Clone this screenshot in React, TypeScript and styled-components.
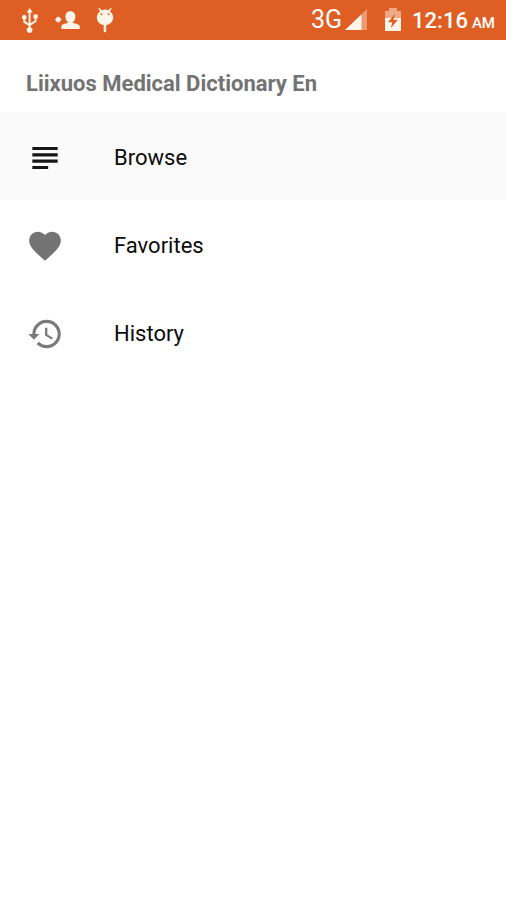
import React from "react";
import styled, { createGlobalStyle } from "styled-components";

const GlobalStyle = createGlobalStyle`
  *, *::before, *::after { box-sizing: border-box; }
  body {
    margin: 0;
    background: #ffffff;
    font-family: Roboto, "Noto Sans", sans-serif;
  }
`;

const Screen = styled.div`
  min-height: 100vh;
  background: #ffffff;
`;

const StatusBar = styled.header`
  display: flex;
  align-items: center;
  justify-content: space-between;
  height: 40px;
  padding: 0 11px 0 20px;
  background: #df5e24;
  color: #ffffff;
`;

const StatusGroup = styled.div<{ $gap: number }>`
  display: flex;
  align-items: center;
  gap: ${({ $gap }) => $gap}px;
`;

const StatusIcon = styled.svg`
  display: block;
  fill: #fff4ea;
`;

const Network = styled.div`
  display: flex;
  align-items: center;
  gap: 2px;
`;

const NetworkLabel = styled.span`
  font-size: 25px;
  line-height: 40px;
`;

const Clock = styled.time`
  display: flex;
  align-items: baseline;
  gap: 4px;
  padding-top: 4px;
  font-size: 22px;
  font-weight: 500;
  line-height: 36px;
`;

const Meridiem = styled.span`
  font-size: 15px;
`;

const Title = styled.h1`
  margin: 0;
  padding: 28px 26px 12px;
  color: #737373;
  font-size: 22px;
  font-weight: 700;
  line-height: 32px;
`;

const Menu = styled.nav`
  display: flex;
  flex-direction: column;
`;

const MenuItem = styled.a<{ $active?: boolean }>`
  display: flex;
  align-items: center;
  gap: 50px;
  height: 88px;
  padding: 4px 26px 0;
  background: ${({ $active }) => ($active ? "#fafafa" : "transparent")};
  color: #0c0c0c;
  font-size: 22px;
  line-height: 32px;
  text-decoration: none;
`;

const MenuIcon = styled.svg<{ $color: string }>`
  flex: none;
  display: block;
  width: 38px;
  height: 38px;
  fill: ${({ $color }) => $color};
`;

const items = [
  {
    label: "Browse",
    color: "#161616",
    active: true,
    path: "M14 17H4v2h10v-2zm6-8H4v2h16V9zM4 15h16v-2H4v2zM4 5v2h16V5H4z",
  },
  {
    label: "Favorites",
    color: "#737373",
    active: false,
    path: "M12 21.35l-1.45-1.32C5.4 15.36 2 12.28 2 8.5 2 5.42 4.42 3 7.5 3c1.74 0 3.41.81 4.5 2.09C13.09 3.81 14.76 3 16.5 3 19.58 3 22 5.42 22 8.5c0 3.78-3.4 6.86-8.55 11.54L12 21.35z",
  },
  {
    label: "History",
    color: "#7a7a7a",
    active: false,
    path: "M13 3c-4.97 0-9 4.03-9 9H1.5L5 15.6 8.5 12H6c0-3.87 3.13-7 7-7s7 3.13 7 7-3.13 7-7 7c-1.93 0-3.68-.79-4.94-2.06l-1.42 1.42C8.27 19.99 10.51 21 13 21c4.97 0 9-4.03 9-9s-4.03-9-9-9zm-1 5v5l4.28 2.54.72-1.21-3.5-2.08V8H12z",
  },
];

export default function App() {
  return (
    <Screen>
      <GlobalStyle />
      <StatusBar>
        <StatusGroup $gap={14}>
          <StatusIcon width="20" height="26" viewBox="0 0 20 26" aria-label="USB">
            <path d="M9.7 1l3 4.6h-2.1v10.6l4.2-2.6v-2.2h-1.3V7.6h4.2v3.8h-1.2v3.4l-5.9 3.8v1.6a2.9 2.9 0 1 1-2 0v-1.4l-5.3-3.4v-3.2a2.2 2.2 0 1 1 2 0v2.1l3.3 2.1V5.6H6.7z" />
          </StatusIcon>
          <StatusIcon width="27" height="26" viewBox="0 0 27 26" aria-label="Contact added">
            <path d="M4.2 9.2l1.3 2.1 2.4 1.3-2.4 1.2-1.3 2.1-1.3-2.1-2.3-1.2 2.3-1.3z" />
            <circle cx="4.2" cy="12.6" r="2.5" />
            <path d="M16.4 4.2c3 0 5 2.2 5 5.3 0 2.6-1.3 4.9-2.9 6.1 1.6 1.2 6.4 1.3 7.3 3.4V22H7.4v-3c.8-2.2 5.2-2.2 6.9-3.4-1.7-1.2-2.9-3.5-2.9-6.1 0-3.1 2-5.3 5-5.3z" />
          </StatusIcon>
          <StatusIcon width="20" height="26" viewBox="0 0 20 26" aria-label="Debugging">
            <path d="M3.3 1.4l.9-.7 2.4 2.5a9 9 0 0 1 6.8 0l2.4-2.5.9.7-1.9 3c2 1.3 3.4 3.4 3.4 6 0 4.1-3.1 6.9-7 7.6v6c0 1.8-2.5 1.8-2.5 0v-6c-3.8-.7-6.9-3.5-6.9-7.6 0-2.6 1.4-4.7 3.4-6z" />
            <circle cx="6.4" cy="7.3" r="1" fill="#df5e24" />
            <circle cx="13.6" cy="7.3" r="1" fill="#df5e24" />
          </StatusIcon>
        </StatusGroup>
        <StatusGroup $gap={17}>
          <Network>
            <NetworkLabel>3G</NetworkLabel>
            <StatusIcon width="24" height="24" viewBox="0 0 24 24" aria-label="Signal strength">
              <path d="M23 1v21H1z" opacity="0.4" />
              <path d="M17.5 6.5V22H1z" />
            </StatusIcon>
          </Network>
          <StatusGroup $gap={11}>
            <StatusIcon width="16" height="26" viewBox="0 0 16 26" aria-label="Battery charging">
              <path d="M0 4h4V1h8v3h4v7H0z" opacity="0.5" />
              <path d="M0 11h16v13H0z" />
              <path d="M9.8 7L3 15.2h4.3L5.9 21l7-8.2H8.6z" fill="#df5e24" />
            </StatusIcon>
            <Clock dateTime="00:16">
              12:16<Meridiem>AM</Meridiem>
            </Clock>
          </StatusGroup>
        </StatusGroup>
      </StatusBar>
      <Title>Liixuos Medical Dictionary En</Title>
      <Menu aria-label="Main">
        {items.map((item) => (
          <MenuItem
            key={item.label}
            href="#"
            $active={item.active}
            aria-current={item.active ? "page" : undefined}
          >
            <MenuIcon $color={item.color} viewBox="0 0 24 24" aria-hidden="true">
              <path d={item.path} />
            </MenuIcon>
            {item.label}
          </MenuItem>
        ))}
      </Menu>
    </Screen>
  );
}
